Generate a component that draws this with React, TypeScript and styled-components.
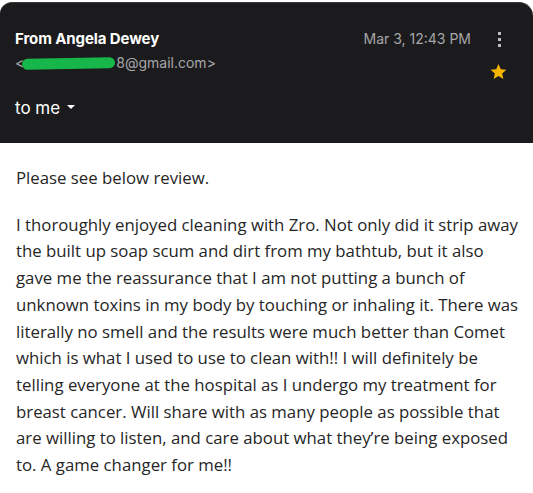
import styled, { createGlobalStyle } from 'styled-components'

const GlobalStyle = createGlobalStyle`
  html, body {
    margin: 0;
    padding: 0;
    background: #ffffff;
  }
  body {
    width: 533px;
    height: 493px;
    overflow: hidden;
  }
`

const Page = styled.div`
  width: 533px;
  height: 493px;
  background: #ffffff;
  display: flex;
  flex-direction: column;
`

const Header = styled.header`
  flex-shrink: 0;
  height: 141px;
  box-sizing: border-box;
  background: #1b1b1d;
  border-top: 1px solid #3a3a3d;
  border-radius: 12px 14px 0 0;
  margin-top: 2px;
  padding: 25px 30px 0 15px;
  display: flex;
  justify-content: space-between;
  font-family: Inter, 'Liberation Sans', sans-serif;
  color: #ffffff;
`

const Sender = styled.div`
  display: flex;
  flex-direction: column;
`

const SenderName = styled.div`
  font-size: 15px;
  font-weight: 700;
  line-height: 22px;
  letter-spacing: -0.1px;
`

const Email = styled.div`
  display: flex;
  align-items: center;
  margin-top: 3px;
  font-size: 14px;
  line-height: 20px;
  color: #a6a6a9;
`

const Redaction = styled.span`
  display: inline-block;
  width: 93px;
  height: 11px;
  margin: 1px 1px 0 -2px;
  background: #16b64a;
  border-radius: 6px;
  transform: rotate(-1deg);
`

const Recipient = styled.div`
  display: flex;
  align-items: center;
  gap: 7px;
  margin-top: 25px;
  font-size: 17px;
  line-height: 20px;
`

const Caret = styled.span`
  width: 0;
  height: 0;
  border-left: 4px solid transparent;
  border-right: 4px solid transparent;
  border-top: 4px solid #ffffff;
  margin-top: -3px;
`

const Meta = styled.div`
  display: flex;
  flex-direction: column;
  align-items: flex-end;
`

const MetaRow = styled.div`
  display: flex;
  align-items: center;
  gap: 24px;
  font-size: 14px;
  line-height: 22px;
  color: #a6a6a9;
`

const Dots = styled.div`
  display: flex;
  flex-direction: column;
  gap: 3px;
  width: 8px;
  align-items: center;

  span {
    width: 3px;
    height: 3px;
    background: #bdbdc0;
  }
`

const Star = styled.svg`
  width: 19px;
  height: 19px;
  margin-top: 12px;
  margin-right: -5px;
`

const Body = styled.main`
  padding: 22px 0 0 16px;
  font-family: 'Segoe UI', 'Open Sans', 'Noto Sans', sans-serif;
  font-size: 16.8px;
  line-height: 26.7px;
  color: #262626;
  white-space: nowrap;
`

const Paragraph = styled.p`
  margin: 0 0 20px 0;
`

const reviewLines = [
  'I thoroughly enjoyed cleaning with Zro. Not only did it strip away',
  'the built up soap scum and dirt from my bathtub, but it also',
  'gave me the reassurance that I am not putting a bunch of',
  'unknown toxins in my body by touching or inhaling it. There was',
  'literally no smell and the results were much better than Comet',
  'which is what I used to use to clean with!! I will definitely be',
  'telling everyone at the hospital as I undergo my treatment for',
  'breast cancer. Will share with as many people as possible that',
  'are willing to listen, and care about what they’re being exposed',
  'to. A game changer for me!!',
]

export default function App() {
  return (
    <Page>
      <GlobalStyle />
      <Header>
        <Sender>
          <SenderName>From Angela Dewey</SenderName>
          <Email>
            &lt;<Redaction />8@gmail.com&gt;
          </Email>
          <Recipient>
            to me <Caret />
          </Recipient>
        </Sender>
        <Meta>
          <MetaRow>
            Mar 3, 12:43 PM
            <Dots>
              <span />
              <span />
              <span />
            </Dots>
          </MetaRow>
          <Star viewBox="0 0 24 24">
            <path
              fill="#f7b500"
              d="M12 2.5l2.9 6.6 7.1.6-5.4 4.7 1.6 7-6.2-3.7-6.2 3.7 1.6-7L2 9.7l7.1-.6z"
            />
          </Star>
        </Meta>
      </Header>
      <Body>
        <Paragraph>Please see below review.</Paragraph>
        <Paragraph>
          {reviewLines.map((line, idx) => (
            <span key={idx}>
              {line}
              {idx < reviewLines.length - 1 && <br />}
            </span>
          ))}
        </Paragraph>
      </Body>
    </Page>
  )
}
